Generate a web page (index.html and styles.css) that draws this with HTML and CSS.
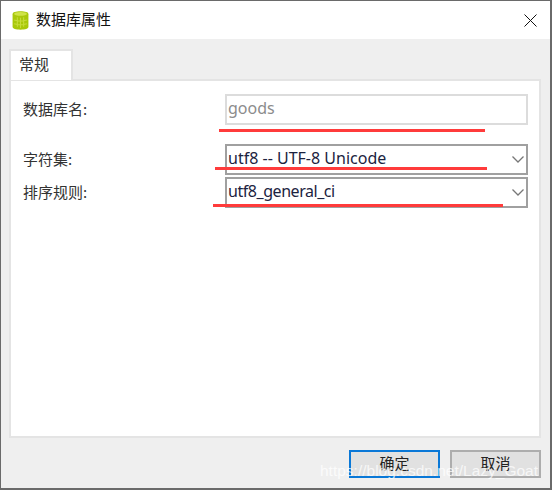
FILE: index.html
```html
<!DOCTYPE html>
<html lang="zh">
<head>
<meta charset="utf-8">
<title>数据库属性</title>
<link rel="stylesheet" href="styles.css">
</head>
<body>
<div class="window">
  <header class="titlebar">
    <svg class="app-icon" viewBox="0 0 16 18" width="17" height="19">
      <path d="M0.500 3C0.500 1.200 3.500 0.300 8 0.300S15.500 1.200 15.500 3V15C15.500 16.800 12.500 17.700 8 17.700S0.500 16.800 0.500 15Z" fill="#a9c80a"/>
      <ellipse cx="8" cy="2.800" rx="6" ry="1.800" fill="#cfe348"/>
      <path d="M5 6v9M8 6.500v9.500M11 6v9M2 8.500q6 2 12 0M2 12q6 2 12 0" stroke="#c6dc3a" stroke-width="1" fill="none"/>
    </svg>
    <span class="title">数据库属性</span>
    <svg class="close" viewBox="0 0 13 13" width="13" height="13">
      <path d="M0.500 0.500L12.500 12.500M12.500 0.500L0.500 12.500" stroke="#111" stroke-width="1" fill="none"/>
    </svg>
  </header>
  <main class="body">
    <div class="tabs"><div class="tab">常规</div></div>
    <section class="panel">
      <div class="row row-name">
        <label class="label">数据库名:</label>
        <div class="field disabled"><span class="value">goods</span></div>
      </div>
      <div class="row row-charset">
        <label class="label">字符集:</label>
        <div class="field select"><span class="value">utf8 -- UTF-8 Unicode</span><svg class="chev" viewBox="0 0 12 7" width="12" height="7"><path d="M0.500 0.500L6 6L11.500 0.500" stroke="#777" stroke-width="1.300" fill="none"/></svg></div>
      </div>
      <div class="row row-collation">
        <label class="label">排序规则:</label>
        <div class="field select"><span class="value tight">utf8_general_ci</span><svg class="chev" viewBox="0 0 12 7" width="12" height="7"><path d="M0.500 0.500L6 6L11.500 0.500" stroke="#777" stroke-width="1.300" fill="none"/></svg></div>
      </div>
    </section>
    <footer class="actions">
      <button class="btn primary"><span class="btn-text">确定</span></button>
      <button class="btn"><span class="btn-text">取消</span></button>
    </footer>
  </main>
  <i class="mark mark-1"></i>
  <i class="mark mark-2"></i>
  <i class="mark mark-3"></i>
  <span class="watermark">https://blog.csdn.net/Lazy_Goat</span>
</div>
</body>
</html>
```
FILE: styles.css
```css
* { box-sizing: border-box; }
html, body { margin: 0; padding: 0; }
body { width: 552px; height: 490px; overflow: hidden; background: #fff; }
.window {
  position: relative;
  width: 552px;
  height: 490px;
  display: flex;
  flex-direction: column;
  border: 1px solid #6a6a6a;
  border-width: 1px 2px 2px 1px;
  font-family: "Noto Sans CJK SC", "Noto Sans", sans-serif;
  color: #222;
  font-size: 15px;
}
.titlebar {
  height: 38px;
  flex: none;
  background: #fff;
  display: flex;
  align-items: center;
  padding: 0 13px 0 11px;
}
.app-icon { flex: none; margin-right: 7px; }
.title { font-size: 15px; line-height: 20px; margin-top: -2px; color: #111; flex: 1; }
.close { flex: none; }
.body {
  flex: 1;
  background: #efefef;
  padding: 10px 9px 10px 8px;
  display: flex;
  flex-direction: column;
}
.tabs { display: flex; height: 31px; flex: none; position: relative; z-index: 1; }
.tab {
  width: 64px;
  height: 31px;
  background: #fff;
  border: 2px solid #e4e4e4;
  border-bottom: 0;
  padding: 2px 0 0 8px;
  font-size: 15px;
  line-height: 22px;
  color: #333;
}
.panel {
  height: 359px;
  flex: none;
  margin-top: -1px;
  background: #fff;
  border: 2px solid #e4e4e4;
  padding: 13px 11px 0 12px;
  display: flex;
  flex-direction: column;
}
.row { display: flex; align-items: center; height: 31px; }
.row-charset { margin-top: 19px; }
.row-collation { margin-top: 2px; }
.label { width: 202px; flex: none; font-size: 15px; line-height: 20px; margin-top: -2px; color: #333; }
.field {
  width: 303px;
  height: 31px;
  flex: none;
  display: flex;
  align-items: center;
  justify-content: space-between;
  padding: 0 2px 0 1px;
  background: #fff;
  border: 2px solid #a0a0a0;
  font-family: "Noto Sans", sans-serif;
  font-size: 16px;
  color: #1c2340;
}
.value { line-height: 20px; margin-top: -3px; }
.value.tight { letter-spacing: -0.450px; }
.field.disabled { border-color: #dcdcdc; color: #8c8c8c; }
.chev { flex: none; }
.actions {
  display: flex;
  justify-content: flex-end;
  gap: 10px;
  margin-top: 12px;
}
.btn {
  width: 91px;
  height: 28px;
  padding: 0;
  background: #e1e1e1;
  border: 2px solid #adadad;
  font-family: inherit;
  font-size: 15px;
  line-height: 20px;
  color: #222;
}
.btn-text { position: relative; top: -1px; }
.btn.primary { border-color: #0a78d7; }
.mark { position: absolute; display: block; height: 3px; background: #ff3b3b; }
.mark-1 { left: 218px; top: 128px; width: 266px; }
.mark-2 { left: 214px; top: 166px; width: 272px; }
.mark-3 { left: 212px; top: 203px; width: 290px; }
.watermark {
  position: absolute;
  left: 319px;
  top: 461px;
  font-family: "Liberation Sans", sans-serif;
  font-size: 15.500px;
  line-height: 17px;
  color: rgba(255, 255, 255, 0.75);
  white-space: nowrap;
}
```
